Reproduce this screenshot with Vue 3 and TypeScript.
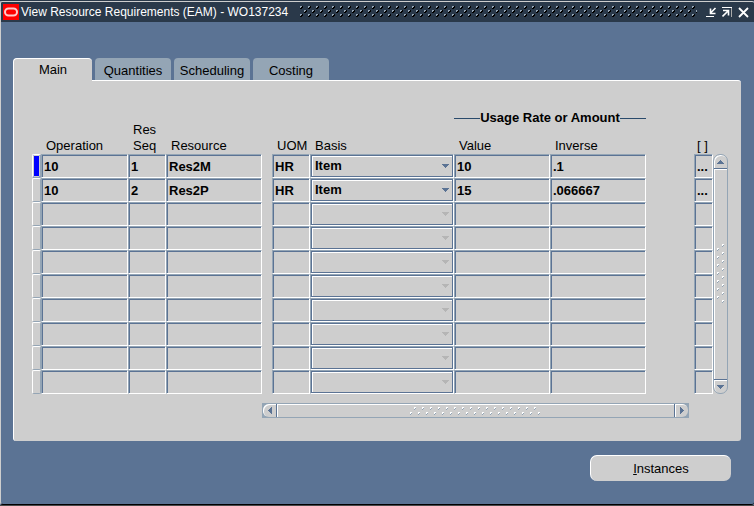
<script setup lang="ts">
import { ref } from 'vue'

interface ResourceRow {
  operation: string
  seq: string
  resource: string
  uom: string
  basis: string
  value: string
  inverse: string
  flex: string
}

const blank: ResourceRow = { operation: '', seq: '', resource: '', uom: '', basis: '', value: '', inverse: '', flex: '' }

const rows = ref<ResourceRow[]>([
  { operation: '10', seq: '1', resource: 'Res2M', uom: 'HR', basis: 'Item', value: '10', inverse: '.1', flex: '...' },
  { operation: '10', seq: '2', resource: 'Res2P', uom: 'HR', basis: 'Item', value: '15', inverse: '.066667', flex: '...' },
  ...Array.from({ length: 8 }, () => ({ ...blank })),
])

const current = ref(0)
const tabs = ['Main', 'Quantities', 'Scheduling', 'Costing']
const activeTab = ref('Main')
</script>

<template>
  <main class="window">
    <header class="titlebar">
      <svg class="logo" viewBox="0 0 16 16" aria-hidden="true">
        <rect width="16" height="16" fill="#ff0000" />
        <rect x="2" y="4.500" width="12" height="7" rx="3.500" fill="none" stroke="#ffc8c8" stroke-width="2" />
      </svg>
      <h1>View Resource Requirements (EAM) - WO137234</h1>
      <svg class="grip" shape-rendering="crispEdges" aria-hidden="true">
        <defs>
          <pattern id="title-dots" width="8" height="12" patternUnits="userSpaceOnUse">
            <path d="M0 0h2v1h-1v1h-1zM4 4h2v1h-1v1h-1zM0 8h2v1h-1v1h-1z" fill="#94a5b5" />
            <path d="M2 0h1v2h-1v1h-2v-1h1v-1h1zM6 4h1v2h-1v1h-2v-1h1v-1h1zM2 8h1v2h-1v1h-2v-1h1v-1h1z" fill="#000" />
          </pattern>
        </defs>
        <rect width="100%" height="12" fill="url(#title-dots)" />
      </svg>
      <div class="controls">
        <button type="button" aria-label="Minimize">
          <svg viewBox="0 0 11 11"><path d="M9.500 1L4.500 6M4.500 1.500v5h5" fill="none" stroke="#fff" stroke-width="1.600" /><path d="M0 9.500h8" stroke="#fff" /></svg>
        </button>
        <button type="button" aria-label="Maximize">
          <svg viewBox="0 0 11 11"><path d="M0 .5h10" stroke="#fff" /><path d="M9.500 1v9" stroke="#aaa" /><path d="M.5 9.500L6 4M1 3.500h5.500v5" fill="none" stroke="#fff" stroke-width="1.600" /></svg>
        </button>
        <button type="button" aria-label="Close">
          <svg viewBox="0 0 11 11"><path d="M1 1L10 10M10 1L1 10" stroke="#fff" stroke-width="1.800" /></svg>
        </button>
      </div>
    </header>

    <div class="body">
      <nav class="tabs" role="tablist">
        <button
          v-for="tab in tabs"
          :key="tab"
          type="button"
          role="tab"
          class="tab"
          :class="{ active: tab === activeTab }"
          :aria-selected="tab === activeTab"
          @click="activeTab = tab"
        >{{ tab }}</button>
      </nav>

      <section class="panel">
        <div class="block">
          <table class="grid">
            <colgroup>
              <col class="c-mark" /><col class="c-op" /><col class="c-small" /><col class="c-field" /><col class="c-gap" />
              <col class="c-small" /><col class="c-basis" /><col class="c-field" /><col class="c-field" /><col /><col class="c-flex" />
            </colgroup>
            <thead>
              <tr class="group-row">
                <td rowspan="2"></td>
                <th rowspan="2" scope="col">Operation</th>
                <th rowspan="2" scope="col">Res<br />Seq</th>
                <th rowspan="2" scope="col">Resource</th>
                <td rowspan="2"></td>
                <th rowspan="2" scope="col">UOM</th>
                <th rowspan="2" scope="col">Basis</th>
                <th colspan="2" scope="colgroup" class="group-head"><span class="group">Usage Rate or Amount</span></th>
                <td rowspan="2"></td>
                <th rowspan="2" scope="col" class="flex-head">[ ]</th>
              </tr>
              <tr class="head-row">
                <th scope="col">Value</th>
                <th scope="col">Inverse</th>
              </tr>
            </thead>
            <tbody>
              <tr v-for="(row, i) in rows" :key="i">
                <td><input v-model="current" class="mark" type="radio" name="record" :value="i" :aria-label="`Record ${i + 1}`" /></td>
                <td><input v-model="row.operation" class="field" type="text" readonly aria-label="Operation" /></td>
                <td><input v-model="row.seq" class="field" type="text" readonly aria-label="Res Seq" /></td>
                <td><input v-model="row.resource" class="field" type="text" readonly aria-label="Resource" /></td>
                <td></td>
                <td><input v-model="row.uom" class="field" type="text" readonly aria-label="UOM" /></td>
                <td>
                  <div class="combo">
                    <select v-model="row.basis" :disabled="!row.basis" aria-label="Basis">
                      <option value=""></option>
                      <option value="Item">Item</option>
                    </select>
                    <svg class="arrow" viewBox="0 0 7 4" shape-rendering="crispEdges" aria-hidden="true"><path d="M0 0h7v1h-1v1h-1v1h-1v1h-1v-1h-1v-1h-1v-1h-1z" /></svg>
                  </div>
                </td>
                <td><input v-model="row.value" class="field" type="text" readonly aria-label="Value" /></td>
                <td><input v-model="row.inverse" class="field" type="text" readonly aria-label="Inverse" /></td>
                <td></td>
                <td><input v-model="row.flex" class="field" type="text" readonly aria-label="Flexfield" /></td>
              </tr>
            </tbody>
          </table>

          <div class="vscroll">
            <button type="button" aria-label="Scroll up"><svg viewBox="0 0 7 4" shape-rendering="crispEdges"><path d="M3 0h1v1h1v1h1v1h1v1h-7v-1h1v-1h1v-1h1z" /></svg></button>
            <div class="vthumb">
              <svg width="8" height="60" shape-rendering="crispEdges" aria-hidden="true">
                <defs>
                  <pattern id="v-dots" width="8" height="8" patternUnits="userSpaceOnUse">
                    <path d="M5 0h2v1h-1v1h-1zM0 4h2v1h-1v1h-1z" fill="#fff" />
                    <path d="M7 1v1h-1v1h-1v-1h1v-1zM2 5v1h-1v1h-1v-1h1v-1z" fill="#94a5b5" />
                  </pattern>
                </defs>
                <rect width="8" height="60" fill="url(#v-dots)" />
              </svg>
            </div>
            <button type="button" aria-label="Scroll down"><svg viewBox="0 0 7 4" shape-rendering="crispEdges"><path d="M0 0h7v1h-1v1h-1v1h-1v1h-1v-1h-1v-1h-1v-1h-1z" /></svg></button>
          </div>
        </div>

        <div class="hscroll">
          <button type="button" class="left" aria-label="Scroll left"><svg viewBox="0 0 4 7" shape-rendering="crispEdges"><path d="M4 0v7h-1v-1h-1v-1h-1v-1h-1v-1h1v-1h1v-1h1v-1z" /></svg></button>
          <div class="hthumb">
            <svg width="132" height="8" shape-rendering="crispEdges" aria-hidden="true">
              <defs>
                <pattern id="h-dots" width="8" height="8" patternUnits="userSpaceOnUse">
                  <path d="M4 0h2v1h-1v1h-1zM0 5h2v1h-1v1h-1z" fill="#fff" />
                  <path d="M6 1v1h-1v1h-1v-1h1v-1zM2 6v1h-1v1h-1v-1h1v-1z" fill="#94a5b5" />
                </pattern>
              </defs>
              <rect width="132" height="8" fill="url(#h-dots)" />
            </svg>
          </div>
          <button type="button" class="right" aria-label="Scroll right"><svg viewBox="0 0 4 7" shape-rendering="crispEdges"><path d="M0 0v7h1v-1h1v-1h1v-1h1v-1h-1v-1h-1v-1h-1v-1z" /></svg></button>
        </div>
      </section>

      <footer class="actions">
        <button type="button" class="push"><u>I</u>nstances</button>
      </footer>
    </div>
  </main>
</template>

<style>
body {
  margin: 0;
  background: #5b7394;
}
</style>

<style scoped>
.window {
  box-sizing: border-box;
  min-height: 100vh;
  display: flex;
  flex-direction: column;
  border-top: 1px solid #2a394a;
  border-bottom: 1px solid #4a4a4a;
  font-family: "Liberation Sans", Arial, sans-serif;
  font-size: 13px;
  line-height: 16px;
  color: #000;
}
button, input, select {
  font: inherit;
  color: inherit;
  margin: 0;
  padding: 0;
  border: 0;
  background: none;
  border-radius: 0;
  appearance: none;
  outline: none;
  box-sizing: border-box;
}
svg {
  display: block;
}
.titlebar {
  display: flex;
  align-items: center;
  height: 20px;
  padding: 0 5px 0 2px;
  border-top: 1px solid #cecece;
  border-left: 1px solid #cecece;
  background: #2a394a;
  border-radius: 2px 2px 0 0;
}
.logo {
  width: 16px;
  height: 16px;
}
.titlebar h1 {
  margin: 0 12px 0 2px;
  font-size: 12px;
  font-weight: normal;
  line-height: 20px;
  white-space: nowrap;
  color: #fff;
}
.grip {
  flex: 1;
  min-width: 0;
  height: 12px;
}
.controls {
  display: flex;
  gap: 5px;
  margin-left: 9px;
}
.controls svg {
  width: 11px;
  height: 11px;
}
.body {
  flex: 1;
  display: flex;
  flex-direction: column;
  padding: 36px 13px 23px 12px;
  border-left: 1px solid #cecece;
  border-bottom: 1px solid #000;
  border-radius: 0 0 3px 3px;
  background: #5b7394;
}
.tabs {
  display: flex;
  gap: 3px;
}
.tab {
  width: 76px;
  height: 22px;
  padding-top: 3px;
  border-radius: 4px 4px 0 0;
  background: #94a5b5;
}
.tab.active {
  position: relative;
  width: 79px;
  height: 23px;
  margin-bottom: -1px;
  padding-top: 0;
  border-top: 1px solid #fff;
  border-left: 1px solid #fff;
  background: #cecece;
}
.panel {
  padding: 28px 13px 23px 18px;
  border-top: 1px solid #fff;
  border-left: 1px solid #fff;
  border-radius: 0 3px 3px 3px;
  background: #cecece;
}
.block {
  display: flex;
  align-items: flex-end;
}
.grid {
  flex: 1;
  min-width: 0;
  table-layout: fixed;
  border-collapse: collapse;
}
.grid th, .grid td {
  padding: 0;
}
.c-mark { width: 9px; }
.c-op { width: 87px; }
.c-small { width: 38px; }
.c-field { width: 96px; }
.c-gap { width: 10px; }
.c-basis { width: 144px; }
.c-flex { width: 19px; }
.group-row {
  height: 18px;
}
.group {
  display: flex;
  align-items: center;
  white-space: nowrap;
}
.group::before, .group::after {
  content: "";
  flex: 1;
  height: 1px;
  background: #2a4a6b;
}
.head-row {
  height: 27px;
}
.grid thead th {
  padding-left: 5px;
  font-weight: normal;
  text-align: left;
  vertical-align: bottom;
  white-space: nowrap;
}
.grid thead .group-head {
  padding-left: 0;
  font-weight: bold;
  vertical-align: middle;
}
.grid thead .flex-head {
  padding-left: 3px;
}
.grid tbody tr {
  height: 24px;
}
.field {
  display: block;
  width: 100%;
  height: 24px;
  padding: 0 1px 0 2px;
  border: 1px solid #fff;
  border-top-color: #94a5b5;
  border-left-color: #94a5b5;
  box-shadow: inset 1px 1px 0 #5b7394;
  font-weight: bold;
}
.mark {
  display: block;
  width: 9px;
  height: 24px;
  border: 1px solid #94a5b5;
  border-left-color: #fff;
  border-top-color: #fff;
  border-radius: 2px;
}
.mark:checked {
  background: #0000ff;
  box-shadow: inset 0 0 0 1px #cecece;
}
.combo {
  position: relative;
  height: 24px;
  box-sizing: border-box;
  border: 1px solid #fff;
  border-top-color: #94a5b5;
  border-left-color: #94a5b5;
}
.combo select {
  display: block;
  width: 100%;
  height: 22px;
  padding-left: 3px;
  border: 1px solid #5b7394;
  box-shadow: inset 1px 1px 0 #fff;
  font-weight: bold;
  opacity: 1;
}
.arrow {
  position: absolute;
  right: 4px;
  top: 9px;
  width: 7px;
  height: 4px;
  fill: #5b7394;
  pointer-events: none;
}
.combo select:disabled + .arrow {
  fill: #b5b5b5;
}
.vscroll {
  display: flex;
  flex-direction: column;
  width: 15px;
  height: 240px;
  box-sizing: border-box;
  border: 1px solid #94a5b5;
  border-radius: 7px;
  box-shadow: inset 1px 1px 0 #fff;
}
.vscroll button {
  display: flex;
  align-items: center;
  justify-content: center;
  height: 13px;
}
.vscroll button svg {
  width: 7px;
  height: 4px;
  fill: #5b7394;
}
.vthumb {
  flex: 1;
  display: flex;
  align-items: center;
  justify-content: center;
  border-top: 1px solid #5b7394;
  border-bottom: 1px solid #5b7394;
  box-shadow: inset 0 1px 0 #fff, 0 1px 0 #fff;
}
.hscroll {
  display: flex;
  height: 15px;
  margin: 9px 39px 0 230px;
  box-sizing: border-box;
  border: 1px solid #94a5b5;
  background: #94a5b5;
}
.hscroll button {
  display: flex;
  align-items: center;
  justify-content: center;
  width: 13px;
  background: #cecece;
}
.hscroll .left {
  border-radius: 6px 0 0 6px;
  box-shadow: inset 1px 1px 0 #fff;
}
.hscroll .right {
  border-radius: 0 6px 6px 0;
  box-shadow: inset 1px 1px 0 #fff;
}
.hscroll button svg {
  width: 4px;
  height: 7px;
  fill: #5b7394;
}
.hthumb {
  flex: 1;
  display: flex;
  align-items: center;
  justify-content: center;
  border-left: 1px solid #5b7394;
  border-right: 1px solid #5b7394;
  background: #cecece;
  box-shadow: inset 1px 1px 0 #fff;
}
.actions {
  display: flex;
  justify-content: flex-end;
  padding: 14px 10px 0 0;
}
.push {
  width: 141px;
  height: 26px;
  border-top: 1px solid #fff;
  border-left: 1px solid #fff;
  border-radius: 7px;
  background: #cecece;
}
</style>
